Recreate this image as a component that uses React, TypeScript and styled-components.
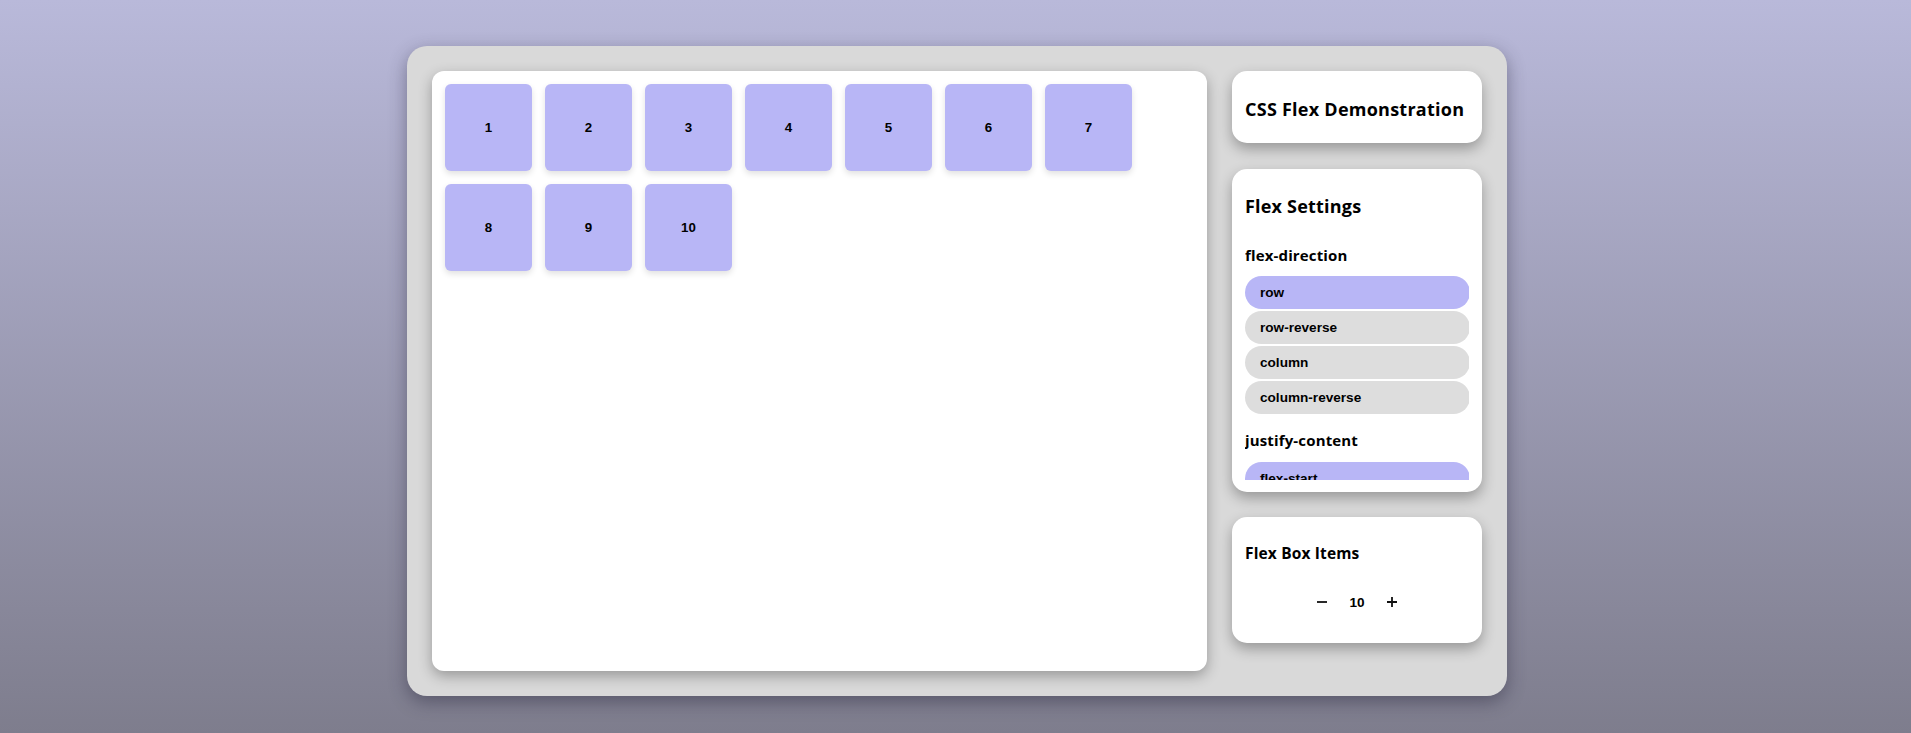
import React, { useState } from "react"
import styled, { createGlobalStyle } from "styled-components"

const GlobalStyle = createGlobalStyle`
  html, body {
    margin: 0;
    padding: 0;
  }
  body {
    min-height: 733px;
    background: linear-gradient(180deg, #b9b9da 0%, #7e7d8d 100%);
    font-family: "Liberation Sans", Arial, sans-serif;
  }
`

const Page = styled.div`
  display: flex;
  justify-content: center;
  padding: 46px 0 0 3px;
  height: 733px;
  box-sizing: border-box;
`

const Panel = styled.div`
  width: 1100px;
  height: 650px;
  box-sizing: border-box;
  padding: 25px;
  background: #d9d9d9;
  border-radius: 20px;
  display: grid;
  grid-template-columns: 775px 250px;
  column-gap: 25px;
  box-shadow: 0 6px 18px rgba(40, 38, 60, 0.45);
`

const Stage = styled.div`
  background: #fff;
  border-radius: 12px;
  box-sizing: border-box;
  padding: 13px;
  display: flex;
  flex-wrap: wrap;
  align-content: flex-start;
  gap: 13px;
  box-shadow: 0 5px 14px rgba(0, 0, 0, 0.3);
`

const Item = styled.div`
  width: 87px;
  height: 87px;
  border-radius: 6px;
  background: #b8b6f6;
  display: flex;
  align-items: center;
  justify-content: center;
  font-weight: 700;
  font-size: 13.33px;
  color: #000;
  box-shadow: 0 3px 6px rgba(0, 0, 0, 0.12);
`

const Sidebar = styled.div`
  display: flex;
  flex-direction: column;
`

const Card = styled.div<{ $h: number; $mt?: number }>`
  height: ${(p) => p.$h}px;
  margin-top: ${(p) => p.$mt ?? 0}px;
  box-sizing: border-box;
  background: #fff;
  border-radius: 15px;
  padding: 0 13px;
  box-shadow: 0 6px 14px rgba(0, 0, 0, 0.3);
`

const TitleCard = styled(Card)`
  display: flex;
  align-items: center;
`

const Title = styled.h1`
  margin: 3px 0 0;
  font-family: "Open Sans", sans-serif;
  font-weight: 700;
  font-size: 18px;
  line-height: 22px;
  color: #000;
  letter-spacing: 0.25px;
`

const Scroller = styled.div`
  height: 298px;
  margin-top: 13px;
  overflow: hidden;
`

const Heading = styled.h2`
  margin: 13px 0 0;
  font-family: "Open Sans", sans-serif;
  font-weight: 700;
  font-size: 18px;
  line-height: 22px;
  color: #000;
  letter-spacing: 0.2px;
`

const Label = styled.h3<{ $mt: number }>`
  margin: ${(p) => p.$mt}px 0 0;
  font-family: "Open Sans", sans-serif;
  font-weight: 700;
  font-size: 15px;
  line-height: 20px;
  color: #000;
  letter-spacing: 0.15px;
`

const Options = styled.div<{ $mt: number }>`
  display: flex;
  flex-direction: column;
  gap: 2px;
  margin-top: ${(p) => p.$mt}px;
`

const Pill = styled.button<{ $active?: boolean }>`
  width: 225px;
  height: 33px;
  flex-shrink: 0;
  border: none;
  border-radius: 17px;
  padding: 0 0 0 15px;
  text-align: left;
  font-family: "Liberation Sans", Arial, sans-serif;
  font-weight: 700;
  font-size: 13.6px;
  color: #000;
  background: ${(p) => (p.$active ? "#b8b6f6" : "#dddddd")};
  cursor: pointer;
`

const SubTitle = styled.h3`
  margin: 0;
  padding-top: 26px;
  font-family: "Open Sans", sans-serif;
  font-weight: 700;
  font-size: 15.5px;
  line-height: 20px;
  color: #000;
  letter-spacing: 0.15px;
`

const Counter = styled.div`
  display: flex;
  justify-content: center;
  align-items: center;
  gap: 14px;
  margin-top: 29px;
`

const StepButton = styled.button`
  border: none;
  background: none;
  padding: 0;
  width: 20px;
  height: 20px;
  display: flex;
  align-items: center;
  justify-content: center;
  cursor: pointer;
  color: #000;
`

const Count = styled.span`
  font-weight: 700;
  font-size: 13.6px;
  min-width: 22px;
  text-align: center;
`

const directions = ["row", "row-reverse", "column", "column-reverse"]

const Minus = () => (
  <svg width="12" height="12" viewBox="0 0 12 12">
    <path d="M1 6h10" stroke="#111" strokeWidth="1.8" />
  </svg>
)

const Plus = () => (
  <svg width="12" height="12" viewBox="0 0 12 12">
    <path d="M1 6h10M6 1v10" stroke="#111" strokeWidth="1.8" />
  </svg>
)

const App = () => {
  const [count, setCount] = useState(10)
  const [direction, setDirection] = useState("row")

  return (
    <>
      <GlobalStyle />
      <Page>
        <Panel>
          <Stage>
            {Array.from({ length: count }, (_, i) => (
              <Item key={i}>{i + 1}</Item>
            ))}
          </Stage>
          <Sidebar>
            <TitleCard $h={72}>
              <Title>CSS Flex Demonstration</Title>
            </TitleCard>
            <Card $h={323} $mt={26}>
              <Scroller>
                <Heading>Flex Settings</Heading>
                <Label $mt={28}>flex-direction</Label>
                <Options $mt={11}>
                  {directions.map((d) => (
                    <Pill key={d} $active={d === direction} onClick={() => setDirection(d)}>
                      {d}
                    </Pill>
                  ))}
                </Options>
                <Label $mt={16}>justify-content</Label>
                <Options $mt={12}>
                  <Pill $active>flex-start</Pill>
                </Options>
              </Scroller>
            </Card>
            <Card $h={126} $mt={25}>
              <SubTitle>Flex Box Items</SubTitle>
              <Counter>
                <StepButton onClick={() => setCount((c) => Math.max(0, c - 1))}>
                  <Minus />
                </StepButton>
                <Count>{count}</Count>
                <StepButton onClick={() => setCount((c) => c + 1)}>
                  <Plus />
                </StepButton>
              </Counter>
            </Card>
          </Sidebar>
        </Panel>
      </Page>
    </>
  )
}

export default App
